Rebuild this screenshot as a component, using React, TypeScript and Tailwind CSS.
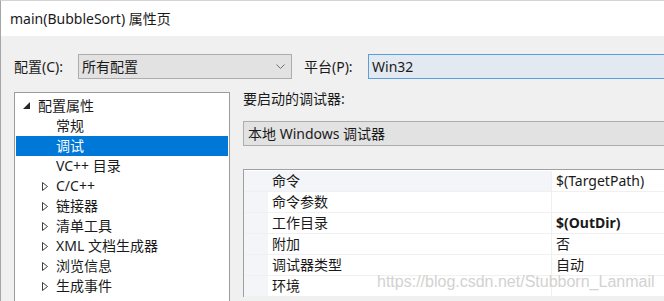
import React from 'react';

const treeItems = [
  { label: '常规', indent: 'child', selected: false },
  { label: '调试', indent: 'child', selected: true },
  { label: 'VC++ 目录', indent: 'child', selected: false },
  { label: 'C/C++', indent: 'collapsed', selected: false },
  { label: '链接器', indent: 'collapsed', selected: false },
  { label: '清单工具', indent: 'collapsed', selected: false },
  { label: 'XML 文档生成器', indent: 'collapsed', selected: false },
  { label: '浏览信息', indent: 'collapsed', selected: false },
  { label: '生成事件', indent: 'collapsed', selected: false },
];

const props = [
  { name: '命令', value: '$(TargetPath)', bold: false },
  { name: '命令参数', value: '', bold: false },
  { name: '工作目录', value: '$(OutDir)', bold: true },
  { name: '附加', value: '否', bold: false },
  { name: '调试器类型', value: '自动', bold: false },
  { name: '环境', value: '', bold: false },
];

const ExpandedArrow = () => (
  <svg width="8" height="8" viewBox="0 0 8 8" className="shrink-0">
    <polygon points="7,0 7,7 0,7" fill="#262626" />
  </svg>
);

const CollapsedArrow = () => (
  <svg width="7" height="9" viewBox="0 0 7 9" className="shrink-0">
    <path d="M0.5 0.5 L5.5 4.5 L0.5 8.5 Z" fill="none" stroke="#3c3c3c" />
  </svg>
);

const Chevron = () => (
  <svg width="9" height="5" viewBox="0 0 9 5">
    <polyline points="0.5,0.5 4.5,4.5 8.5,0.5" fill="none" stroke="#707070" />
  </svg>
);

export default function App() {
  return (
    <div className="w-[664px] h-[301px] overflow-hidden flex flex-col border-t border-[#d4d4d4] border-l border-l-[#a6a6a6] text-[14px] text-[#1a1a1a] font-['Noto_Sans','Noto_Sans_CJK_SC',sans-serif]">
      {/* title */}
      <div className="h-[35px] shrink-0 bg-white flex items-center pl-[9px] text-[14px]">
        main(BubbleSort) 属性页
      </div>

      <div className="flex-1 bg-[#f0f0f0] flex flex-col pt-[18px]">
        {/* config / platform row */}
        <div className="flex items-center h-[25px] pl-[13px]">
          <span className="w-[64px] leading-[18px]">配置(C):</span>
          <div className="w-[214px] h-[25px] flex items-center justify-between pl-[3px] pr-[6px] bg-[#e2e2e2] border border-[#adadad]">
            <span className="leading-[18px]">所有配置</span>
            <Chevron />
          </div>
          <span className="ml-[12px] w-[64px] leading-[18px]">平台(P):</span>
          <div className="flex-1 h-[25px] flex items-center pl-[3px] bg-[#e3e9f1] border border-[#5a9fdc] border-r-0">
            <span className="leading-[18px]">Win32</span>
          </div>
        </div>

        <div className="flex mt-[13px] pl-[13px]">
          {/* tree */}
          <div className="w-[216px] h-[220px] shrink-0 bg-white border border-[#9c9c9c] pt-[3px] flex flex-col">
            <div className="h-[20px] flex items-center pl-[8px]">
              <ExpandedArrow />
              <span className="ml-[7px] leading-[18px]">配置属性</span>
            </div>
            {treeItems.map((item) => (
              <div
                key={item.label}
                className={
                  item.selected
                    ? 'h-[20px] mx-[1px] flex items-center pl-[40px] bg-[#0078d7] text-white'
                    : 'h-[20px] mx-[1px] flex items-center pl-[40px]'
                }
              >
                {item.indent === 'collapsed' ? (
                  <div className="-ml-[14px] w-[14px] flex items-center">
                    <CollapsedArrow />
                  </div>
                ) : null}
                <span className="leading-[18px]">{item.label}</span>
              </div>
            ))}
          </div>

          {/* right panel */}
          <div className="flex-1 flex flex-col pl-[13px]">
            <div className="h-[18px] mt-[-2px] leading-[18px]">要启动的调试器:</div>
            <div className="mt-[13px] h-[25px] flex items-center pl-[4px] bg-[#e2e2e2] border border-[#adadad] border-r-0">
              <span className="leading-[18px]">本地 Windows 调试器</span>
            </div>

            {/* property grid */}
            <div className="relative mt-[23px] bg-white border-t border-l border-[#a0a0a0] pt-[1px] flex flex-col">
              {props.map((p, i) => (
                <div key={p.name} className="flex h-[21px] border-b border-[#f0f0f0]">
                  <div className="w-[24px] shrink-0 bg-[#f3f5f9]" />
                  <div
                    className={
                      i === 0
                        ? 'w-[283px] shrink-0 flex items-center pl-[4px] bg-[#f3f5f9]'
                        : 'w-[283px] shrink-0 flex items-center pl-[4px]'
                    }
                  >
                    <span className="leading-[18px]">{p.name}</span>
                  </div>
                  <div className="flex-1 flex items-center pl-[4px] border-l border-[#f0f0f0]">
                    <span className={p.bold ? 'leading-[18px] font-bold' : 'leading-[18px]'}>{p.value}</span>
                  </div>
                </div>
              ))}
              <div className="absolute left-[133px] top-[102px] text-[16px] leading-[20px] text-[#d2d2d2] font-['Liberation_Sans',sans-serif] whitespace-nowrap">
                https://blog.csdn.net/Stubborn_Lanmail
              </div>
            </div>
          </div>
        </div>
      </div>
    </div>
  );
}
